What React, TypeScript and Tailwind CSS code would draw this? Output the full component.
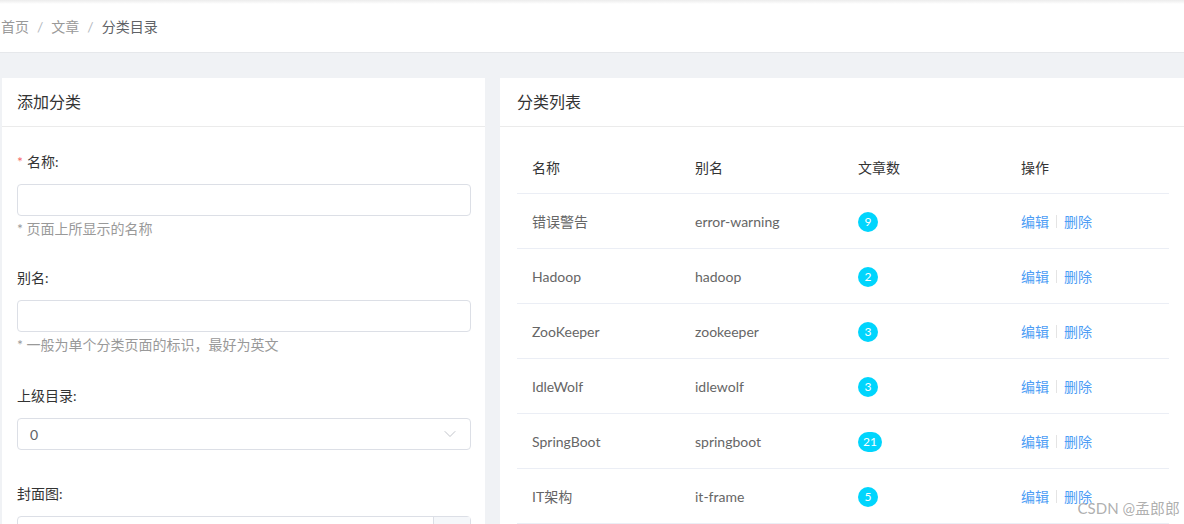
import { ChevronDown } from 'lucide-react';

const rows = [
  { name: '错误警告', alias: 'error-warning', count: 9 },
  { name: 'Hadoop', alias: 'hadoop', count: 2 },
  { name: 'ZooKeeper', alias: 'zookeeper', count: 3 },
  { name: 'IdleWolf', alias: 'idlewolf', count: 3 },
  { name: 'SpringBoot', alias: 'springboot', count: 21 },
  { name: 'IT架构', alias: 'it-frame', count: 5 },
];

const font = { fontFamily: 'Lato, "Noto Sans CJK SC", sans-serif' };

const Breadcrumb = () => (
  <div className="h-[53px] bg-white border-b border-[#e6e8eb] relative">
    <div className="absolute top-0 left-0 right-0 h-[4px] bg-gradient-to-b from-[#ececec] to-white" />
    <div className="flex items-center h-full pl-[1px] text-[14px] text-[#999]">
      <span>首页</span>
      <span className="mx-[8px] text-[#b5b9c0]">/</span>
      <span>文章</span>
      <span className="mx-[8px] text-[#b5b9c0]">/</span>
      <span className="text-[#606266]">分类目录</span>
    </div>
  </div>
);

const AddForm = () => (
  <div className="w-[483px] shrink-0 bg-white">
    <div className="h-[49px] px-[15px] flex items-center border-b border-[#ebebeb] text-[16px] text-[#333]">
      添加分类
    </div>
    <div className="pl-[15px] pr-[14px] pt-[25px] text-[14px]">
      {/* 名称 */}
      <div className="leading-[20px] text-[#333]">
        <span className="text-[#f56c6c] mr-[4px]">*</span>名称:
      </div>
      <div className="mt-[12px] h-[32px] border border-[#dcdfe6] rounded-[4px]" />
      <div className="mt-[3px] leading-[20px] text-[#999]">* 页面上所显示的名称</div>

      {/* 别名 */}
      <div className="mt-[29px] leading-[20px] text-[#333]">别名:</div>
      <div className="mt-[12px] h-[32px] border border-[#dcdfe6] rounded-[4px]" />
      <div className="mt-[3px] leading-[20px] text-[#999]">* 一般为单个分类页面的标识，最好为英文</div>

      {/* 上级目录 */}
      <div className="mt-[31px] leading-[20px] text-[#333]">上级目录:</div>
      <div className="mt-[12px] h-[32px] border border-[#dcdfe6] rounded-[4px] flex items-center justify-between pl-[12px] pr-[10px] text-[#606266]">
        <span>0</span>
        <ChevronDown size={20} strokeWidth={1} className="text-[#b4b8bf]" />
      </div>

      {/* 封面图 */}
      <div className="mt-[34px] leading-[20px] text-[#333]">封面图:</div>
      <div className="mt-[12px] h-[32px] border border-[#dcdfe6] rounded-[4px] flex">
        <div className="flex-1" />
        <div className="w-[37px] border-l border-[#dcdfe6] bg-[#f5f7fa]" />
      </div>
    </div>
  </div>
);

const CategoryTable = () => (
  <div className="w-[686px] shrink-0 bg-white">
    <div className="h-[49px] px-[17px] flex items-center border-b border-[#ebebeb] text-[16px] text-[#333]">
      分类列表
    </div>
    <div className="px-[17px] pt-[15px] text-[14px]">
      <div className="grid grid-cols-4 h-[52px] items-center border-b border-[#ebeef5] text-[#333]">
        <div className="px-[15px]">名称</div>
        <div className="px-[15px]">别名</div>
        <div className="px-[15px]">文章数</div>
        <div className="px-[15px]">操作</div>
      </div>
      {rows.map((row) => (
        <div key={row.alias} className="grid grid-cols-4 h-[55px] items-center border-b border-[#ebeef5] text-[#666]">
          <div className="px-[15px]">{row.name}</div>
          <div className="px-[15px]">{row.alias}</div>
          <div className="px-[15px]">
            <span className="inline-flex items-center justify-center h-[20px] min-w-[20px] px-[5px] rounded-full bg-[#00d5fd] text-white text-[12px] leading-none">
              {row.count}
            </span>
          </div>
          <div className="px-[15px] flex items-center text-[#4d9df5]">
            <span>编辑</span>
            <span className="mx-[7px] w-px h-[13px] bg-[#e4e4e4]" />
            <span>删除</span>
          </div>
        </div>
      ))}
    </div>
  </div>
);

export default function App() {
  return (
    <div className="w-[1184px] h-[524px] overflow-hidden bg-[#f0f2f5] relative" style={font}>
      <Breadcrumb />
      <div className="flex gap-[15px] pl-[2px] pt-[25px] w-[1200px]">
        <AddForm />
        <CategoryTable />
      </div>
      <div className="absolute right-[4px] bottom-[5px] text-[15px] text-[#9a9a9a]/80">CSDN @孟郎郎</div>
    </div>
  );
}
